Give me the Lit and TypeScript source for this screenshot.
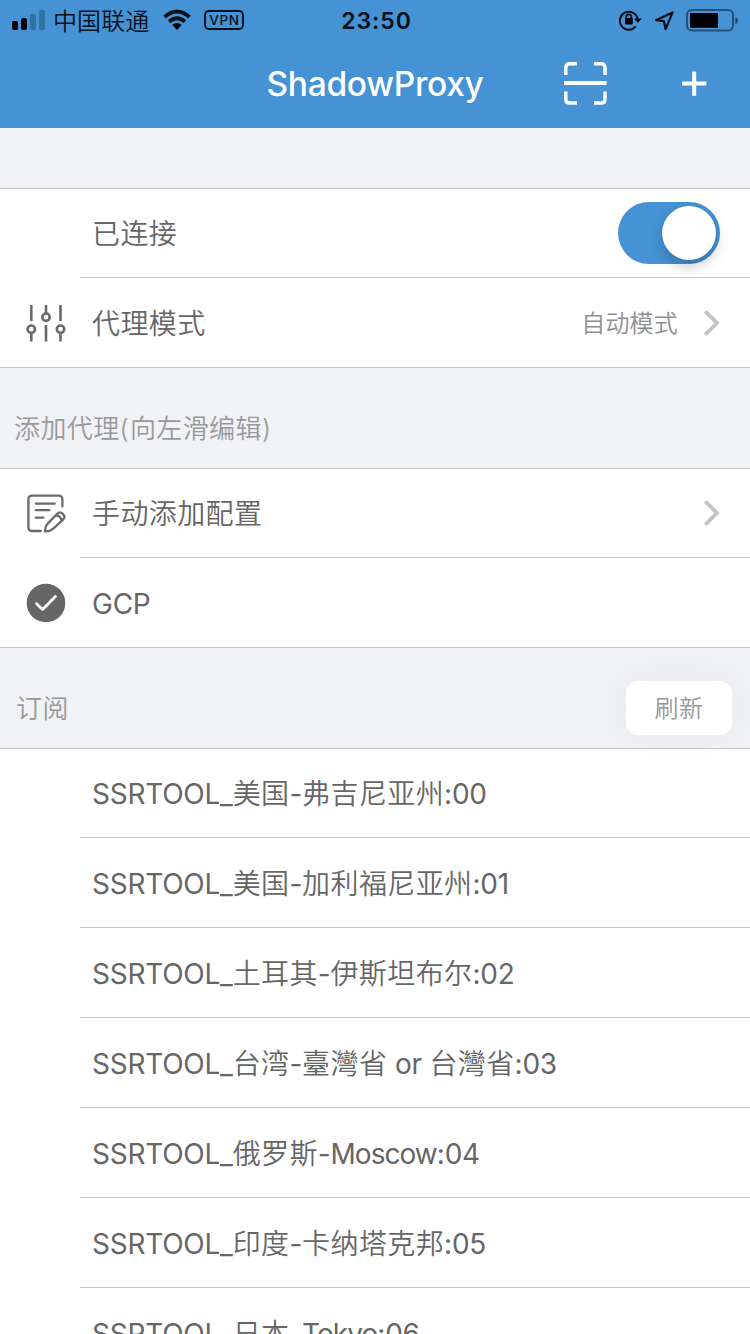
import { LitElement, html, css, nothing } from "lit";
import { customElement } from "lit/decorators.js";

const RUN = /([\u3400-\u9fff]+|[A-Z][a-z]+)/;
const HAN = /[\u3400-\u9fff]/;
const WORD = /^[A-Z][a-z]+$/;

const kind = (part: string) => (HAN.test(part) ? "han" : WORD.test(part) ? "word" : "latin");

/** Splits a label so that Han, word and code runs can be tracked separately. */
const runs = (text: string) =>
  text
    .split(RUN)
    .filter((part) => part.length > 0)
    .map((part) => html`<span class=${kind(part)}>${part}</span>`);

const slidersIcon = html`<svg class="icon" viewBox="0 0 40 40">
  <g fill="none" stroke="#6a6a6a" stroke-width="2.6">
    <path d="M5.3 2V18M5.3 30V38.5M20 2V11M20 22V38.5M34.5 2V18M34.5 30V38.5" />
    <circle cx="5.3" cy="26.2" r="3.7" /><circle cx="20" cy="14.2" r="3.7" /><circle cx="34.5" cy="26.2" r="3.7" />
  </g>
</svg>`;

const noteIcon = html`<svg class="icon" viewBox="0 0 40 40">
  <g fill="none" stroke="#6a6a6a" stroke-width="2.3" stroke-linecap="round" stroke-linejoin="round">
    <path d="M36.4 12.6V5.2Q36.4 1.6 32.6 1.6H6.2Q2.4 1.6 2.4 5.4V33.2Q2.4 37 6.2 37H14.8" />
    <path d="M9.8 9.6H28.8M9.8 16.2H23.4M9.8 23.6H17.4" />
    <path d="M19 37.4Q18.6 33 21.7 29.6L31.4 19.6Q33.8 17.2 36.4 19.6L37.2 20.4Q39.6 22.8 37.3 25.3L27.3 34.6Q23.4 37.8 19 37.4ZM30.4 20.9Q34.6 22.4 35.8 26.4" />
  </g>
</svg>`;

const checkIcon = html`<svg class="icon" viewBox="0 0 40 40">
  <circle cx="20" cy="20" r="19.3" fill="#666" />
  <path d="M10.6 20.8L16.6 26.4L29.4 13.4" fill="none" stroke="#fff" stroke-width="2.8" stroke-linecap="round" stroke-linejoin="round" />
</svg>`;

const chevron = html`<svg class="chevron" width="18" height="28" viewBox="0 0 18 28">
  <path d="M3.3 2.3L15 14L3.3 25.7" fill="none" stroke="#c3c3c7" stroke-width="3.8" />
</svg>`;

const servers = [
  "SSRTOOL_美国-弗吉尼亚州:00",
  "SSRTOOL_美国-加利福尼亚州:01",
  "SSRTOOL_土耳其-伊斯坦布尔:02",
  "SSRTOOL_台湾-臺灣省 or 台灣省:03",
  "SSRTOOL_俄罗斯-Moscow:04",
  "SSRTOOL_印度-卡纳塔克邦:05",
  "SSRTOOL_日本-Tokyo:06",
];

@customElement("status-bar")
export class StatusBar extends LitElement {
  static styles = css`
    :host {
      display: grid;
      grid-template-columns: 1fr auto 1fr;
      align-items: center;
      height: 40px;
      padding: 0 11px 0 12px;
      color: #06101c;
    }
    .left, .right { display: flex; align-items: center; }
    .right { justify-content: flex-end; }
    .carrier { margin-left: 8px; padding-top: 4px; font-size: 24px; line-height: 36px; letter-spacing: 0.1px; font-weight: 350; }
    .wifi { margin-left: 14px; }
    .vpn {
      box-sizing: border-box;
      width: 40px;
      height: 20px;
      margin-left: 13px;
      border: 2px solid #06101c;
      border-radius: 5px;
      font-size: 13.5px;
      line-height: 16px;
      font-weight: 500;
      letter-spacing: 0.6px;
      text-align: center;
    }
    .time { font-size: 23px; font-weight: 560; letter-spacing: 0.9px; line-height: 38px; padding-left: 2px; padding-top: 2px; }
    svg { display: block; }
  `;

  render() {
    return html`
      <div class="left">
        <svg width="33" height="40" viewBox="0 0 33 40">
          <rect x="0" y="21" width="6" height="9" rx="2" />
          <rect x="9" y="18" width="6" height="12" rx="2" />
          <rect x="18" y="14" width="6" height="16" rx="2" fill="#2f74a0" />
          <rect x="27" y="10" width="6" height="20" rx="2" fill="#2f74a0" />
        </svg>
        <span class="carrier">中国联通</span>
        <svg class="wifi" width="28" height="40" viewBox="0 0 28 40">
          <path d="M1.6 17.1Q14 5.9 26.4 17.1M6.1 21.6Q14 14.7 21.9 21.6" fill="none" stroke="#06101c" stroke-width="3.8" />
          <path d="M9.2 24.8Q14 21.2 18.8 24.8L14 30Z" />
        </svg>
        <span class="vpn">VPN</span>
      </div>
      <div class="time">23:50</div>
      <div class="right">
        <svg width="120" height="40" viewBox="0 0 120 40">
          <g fill="none" stroke="#06101c" stroke-width="2">
            <path d="M16.8 26.4A9 9 0 1 1 18.7 19.2" />
            <path d="M7.2 19V17Q7.2 14.4 9.8 14.4T12.4 17V19" stroke-width="1.7" />
            <path d="M37 20.2L53.6 12.4L46.6 29.2L45 21.2Z" stroke-width="2.2" stroke-linejoin="round" />
            <rect x="68" y="10" width="46" height="20.6" rx="5" opacity=".5" />
          </g>
          <path d="M15 18.4H22.8L18.9 22.8Z" />
          <rect x="6" y="18" width="7.8" height="6.4" rx="1" />
          <rect x="71" y="13" width="28" height="14.8" rx="1" />
          <path d="M116.4 16.8Q119 18 119 20.5T116.4 24.2Z" opacity=".5" />
        </svg>
      </div>
    `;
  }
}

@customElement("nav-bar")
export class NavBar extends LitElement {
  static styles = css`
    :host { display: grid; grid-template-columns: 1fr auto 1fr; align-items: center; height: 88px; color: #fff; }
    .title { grid-column: 2; font-size: 33.5px; font-weight: 500; letter-spacing: -0.3px; line-height: 88px; }
    .actions { display: flex; align-items: center; justify-content: flex-end; gap: 74px; padding: 0 43px 2px 0; }
    svg { display: block; }
  `;

  render() {
    return html`
      <div class="title">ShadowProxy</div>
      <div class="actions">
        <svg width="44" height="44" viewBox="0 0 44 44" fill="none" stroke="#fff" stroke-width="3.4">
          <path d="M2.8 14V6.8Q2.8 2.8 6.8 2.8H14M31 2.8H38.2Q42 2.8 42 6.8V14M42 30.4V38.2Q42 42 38.2 42H31M14 42H6.8Q2.8 42 2.8 38.2V30.4" />
          <path d="M1 22H43.6" stroke-width="4" />
        </svg>
        <svg width="26" height="26" viewBox="0 0 26 26" fill="none" stroke="#fff" stroke-width="4">
          <path d="M1 13.6H25.4M13.2 1.4V25.8" />
        </svg>
      </div>
    `;
  }
}

@customElement("app-root")
export class AppRoot extends LitElement {
  static styles = css`
    :host {
      display: block;
      box-sizing: border-box;
      width: 750px;
      height: 1334px;
      overflow: hidden;
      background: #f0f2f6;
      color: #666;
      font-family: Inter, "Noto Sans CJK SC", sans-serif;
      font-size: 28px;
    }
    .header { height: 128px; background: #4592d5; }
    .spacer { height: 60px; }
    .group { border-top: 1px solid #c8c7cc; background: #fff; }
    .row { display: grid; grid-template-columns: 80px 1fr; height: 90px; }
    .row:first-child { height: 89px; }
    .lead { display: flex; align-items: center; padding-left: 26px; }
    .body {
      display: flex;
      align-items: center;
      box-sizing: border-box;
      padding: 0 30px 0 12px;
      border-bottom: 1px solid #c8c7cc;
    }
    .row:last-child .lead { border-bottom: 1px solid #c8c7cc; }
    .label { flex: 1; white-space: pre; line-height: 40px; padding-top: 2px; }
    .han { letter-spacing: 0.4px; font-weight: 350; }
    .latin { letter-spacing: -0.25px; font-weight: 400; }
    .word { letter-spacing: -0.95px; font-weight: 400; }
    .value { margin-right: 24px; padding-bottom: 2px; font-size: 24px; color: #8e8e93; }
    .icon { display: block; width: 40px; height: 40px; }
    .chevron { display: block; }
    .switch {
      display: flex;
      justify-content: flex-end;
      box-sizing: border-box;
      width: 102px;
      height: 62px;
      padding: 4px;
      border-radius: 31px;
      background: #4592d5;
    }
    .knob { width: 54px; height: 54px; border-radius: 50%; background: #fff; box-shadow: 0 6px 14px rgba(0, 0, 0, 0.22); }
    .value .han { letter-spacing: 0.2px; }
    .section {
      display: flex;
      align-items: center;
      justify-content: space-between;
      box-sizing: border-box;
      height: 100px;
      padding: 20px 18px 0 14px;
      font-size: 26px;
      color: #999;
    }
    .section.subscribe { padding-left: 16px; }
    .caption { padding-bottom: 4px; }
    .caption .latin { letter-spacing: 1.2px; font-weight: 300; }
    .refresh {
      box-sizing: border-box;
      width: 106px;
      height: 54px;
      padding-top: 2px;
      border-radius: 12px;
      background: #fff;
      box-shadow: 0 0 40px rgba(0, 0, 0, 0.05);
      font-size: 24px;
      line-height: 52px;
      text-align: center;
    }
  `;

  private row(label: string, icon: unknown = nothing, trailing: unknown = nothing) {
    return html`<div class="row">
      <div class="lead">${icon}</div>
      <div class="body"><div class="label">${runs(label)}</div>${trailing}</div>
    </div>`;
  }

  render() {
    return html`
      <div class="header"><status-bar></status-bar><nav-bar></nav-bar></div>
      <div class="spacer"></div>
      <div class="group">
        ${this.row("已连接", nothing, html`<div class="switch"><div class="knob"></div></div>`)}
        ${this.row("代理模式", slidersIcon, html`<div class="value">${runs("自动模式")}</div>${chevron}`)}
      </div>
      <div class="section"><div class="caption">${runs("添加代理(向左滑编辑)")}</div></div>
      <div class="group">
        ${this.row("手动添加配置", noteIcon, chevron)}
        ${this.row("GCP", checkIcon)}
      </div>
      <div class="section subscribe">
        <div class="caption">${runs("订阅")}</div>
        <div class="refresh">${runs("刷新")}</div>
      </div>
      <div class="group">${servers.map((name) => this.row(name))}</div>
    `;
  }
}
